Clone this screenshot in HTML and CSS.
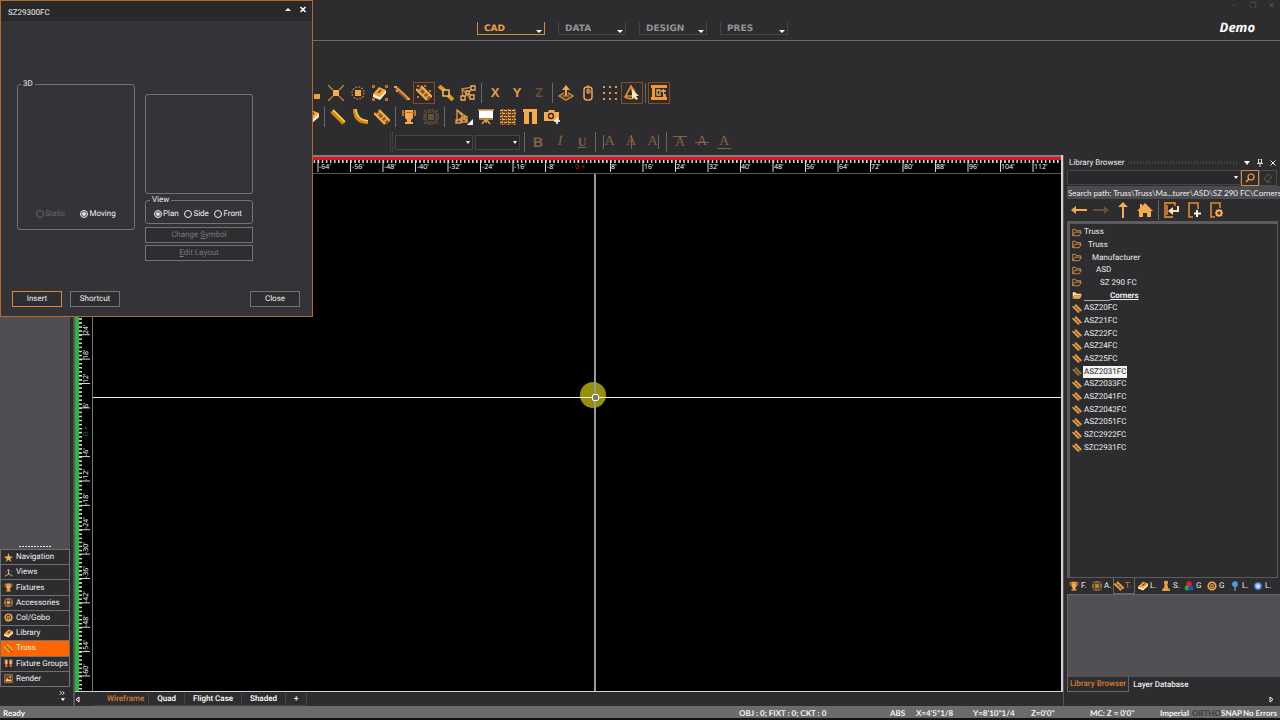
FILE: index.html
```html
<!DOCTYPE html>
<html lang="en">
<head>
<meta charset="utf-8">
<title>SZ29300FC</title>
<link rel="stylesheet" href="styles.css">
</head>
<body>
<svg class="sprite" aria-hidden="true">
  <symbol id="nodes" viewBox="0 0 16 16"><path d="M0 0h2v2h-2zM3 3h2v2h-2zM8 9h6v5h-6z" fill="#f0a040"/></symbol>
  <symbol id="burst" viewBox="0 0 16 16"><path d="M5 5h6v6H5z" fill="#f6a84a"/><path d="M0 0l5 5M16 0l-5 5M0 16l5-5M16 16l-5-5" stroke="#c47c2a" stroke-width="1.5"/></symbol>
  <symbol id="ring" viewBox="0 0 16 16"><path d="M5 5h6v6H5z" fill="#f6a84a"/><circle cx="8" cy="8" r="6" fill="none" stroke="#c08038" stroke-width="1.5" stroke-dasharray="1.5 1.6"/></symbol>
  <symbol id="bookdots" viewBox="0 0 16 16"><path d="M1 9l6-7 7 3-6 8z" fill="#f6a63c"/><path d="M1 9l7 3 6-7v3l-6 7-7-3z" fill="#fff0c8"/><path d="M6 8l3-3" stroke="#5a3a18" stroke-width="1.5"/><path d="M0 0h3v3H0zM13 0h3v3h-3zM0 13h3v3H0zM13 13h3v3h-3z" fill="#b87428"/></symbol>
  <symbol id="beam" viewBox="0 0 16 16"><path d="M2 3l12 11" stroke="#8c5a24" stroke-width="4"/><path d="M2 2l12 11" stroke="#f0a444" stroke-width="1.500"/><path d="M0 1h3v2H0zM13 13h3v2h-3zM2 5h2v2H2z" fill="#f0a444"/></symbol>
  <symbol id="truss" viewBox="0 0 16 16"><path d="M3 3l11 11" stroke="#8c5822" stroke-width="5"/><path d="M0 4l11 11M5 1l11 11" stroke="#f8ac48" stroke-width="2.200"/><path d="M3 6l4-3M7 10l4-4M10 13l4-4" stroke="#f8ac48" stroke-width="1.200"/></symbol>
  <symbol id="trussd" viewBox="0 0 16 16"><use href="#truss"/><path d="M1 0h2v2H1zM8 0h2v2H8zM13 5h2v2h-2zM1 11h2v2H1z" fill="#bb7c38"/></symbol>
  <symbol id="joint" viewBox="0 0 16 16"><path d="M1 1l6 5M10 10l5 5" stroke="#dc9a20" stroke-width="4"/><path d="M5 5h6v6H5z" fill="#2d2d30" stroke="#f6b660" stroke-width="1.6"/></symbol>
  <symbol id="links" viewBox="0 0 16 16"><path d="M2 4l11-2L9 8 3 13zM3 5l7 8" fill="none" stroke="#c88638" stroke-width="1.3"/><path d="M11 1h4v4h-4zM1 11h4v4H1zM10 10h4v4h-4zM6 6h3v3H6z" fill="#33281c" stroke="#f2ad5c" stroke-width="1.300"/></symbol>
  <symbol id="place" viewBox="0 0 16 16"><path d="M8 11V3" stroke="#f6a84a" stroke-width="2"/><path d="M4 5l4-5 4 5z" fill="#f6a84a"/><path d="M6 8l-5 3 7 4 7-4-5-3M5 11h6" fill="none" stroke="#c8842e" stroke-width="1.6"/></symbol>
  <symbol id="mouse" viewBox="0 0 16 16"><rect x="4" y="2" width="8" height="13" rx="3" fill="none" stroke="#f2a44a" stroke-width="1.5"/><path d="M8 0v8M7 5h3v3H7z" stroke="#f2a44a" fill="none"/></symbol>
  <symbol id="dots" viewBox="0 0 16 16"><path d="M1 1h2v2H1zM7 1h2v2H7zM13 1h2v2h-2zM1 7h2v2H1zM7 7h2v2H7zM13 7h2v2h-2zM1 13h2v2H1zM7 13h2v2H7zM13 13h2v2h-2z" fill="#e29a48"/></symbol>
  <symbol id="select" viewBox="0 0 16 16"><path d="M7 1L1 12c3 2 6 2 9 1zM7 1l4 6M2 11h8" fill="none" stroke="#dc902c" stroke-width="1.6"/><path d="M8 4v10l2-2 2 3 2-1-2-3h3z" fill="#ffe4bc"/></symbol>
  <symbol id="measure" viewBox="0 0 16 16"><path d="M0 0h16v3H0zM0 12h16v3H0zM1 3h3v9H1zM12 9h3v4h-3z" fill="#f09c2c"/><path d="M6 5h3v5H6zM10 6h5M12.500 4v5" fill="none" stroke="#e8b060" stroke-width="1.3"/></symbol>
  <symbol id="book" viewBox="0 0 16 16"><path d="M0 9l8-8 8 3-8 9z" fill="#f6a63c"/><path d="M0 9l8 3 8-8v4l-8 7-8-3z" fill="#fff0c8"/><path d="M7 7l4-3" stroke="#5a3a18" stroke-width="2"/></symbol>
  <symbol id="pipe" viewBox="0 0 16 16"><path d="M2 2l12 12" stroke="#d48b12" stroke-width="4.6"/><path d="M3 1l12 12" stroke="#ffcf50" stroke-width="1.6"/></symbol>
  <symbol id="curve" viewBox="0 0 16 16"><path d="M3 0c0 8 4 13 13 13" fill="none" stroke="#d48b12" stroke-width="4"/><path d="M4 0c0 7 5 11 12 12" fill="none" stroke="#ffcf50" stroke-width="1.4"/></symbol>
  <symbol id="lamp" viewBox="0 0 16 16"><path d="M4 1h8v8l-2 2v2h2v2H4v-2h2v-2L4 9z" fill="#f6a84a"/><path d="M1 1h2v6H1zM13 1h2v6h-2zM3 3h10v1H3z" fill="#b97430"/></symbol>
  <symbol id="gear" viewBox="0 0 16 16"><path d="M5 5h6v6H5z" fill="currentColor"/><path d="M5 3V1h6v2zM5 13v2h6v-2zM3 5H1v6h2zM13 5h2v6h-2z" fill="none" stroke="currentColor" stroke-width="1.2"/><path d="M1 1l3 3M15 1l-3 3M1 15l3-3M15 15l-3-3" stroke="currentColor" stroke-width="1.200"/></symbol>
  <symbol id="shape" viewBox="0 0 18 16"><path d="M2 1v11l4-3 6 3zM2 1l10 7M7 8h5v5H7zM1 11h5v3H1z" fill="none" stroke="#e49a48" stroke-width="1.3"/><path d="M18 10v6h-6z" fill="#fff"/></symbol>
  <symbol id="board" viewBox="0 0 16 16"><path d="M1 1h14v8H1z" fill="#fff"/><path d="M0 1h16M1 10h14M8 10v4M8 10l-4 5M8 10l4 5" stroke="#e49a48" stroke-width="1.5"/></symbol>
  <symbol id="weave" viewBox="0 0 16 16"><path d="M0 0h16v16H0z" fill="#6b4420"/><path d="M0 1.500h16M0 7.500h16M0 13.500h16" stroke="#f5b66c" stroke-dasharray="3 1"/><path d="M0 4.500h16M0 10.500h16" stroke="#f5b66c" stroke-dasharray="1 2 2 1"/><path d="M2.500 0v16M8.500 0v16M14.500 0v16" stroke="#d99a50" stroke-dasharray="2 1"/></symbol>
  <symbol id="gate" viewBox="0 0 16 16"><path d="M1 0h14v3H1zM2 3h5v12H2zM10 3h5v12h-5z" fill="#f6a84a"/></symbol>
  <symbol id="camera" viewBox="0 0 16 16"><path d="M0 3h4l1-2h5l1 2h4v9H0z" fill="#f6ab4c"/><circle cx="7" cy="7" r="2.5" fill="#f6ab4c" stroke="#372817" stroke-width="1.4"/><path d="M13 9v6M10 12h6" stroke="#fff" stroke-width="1.6"/></symbol>
  <symbol id="star" viewBox="0 0 16 16"><path d="M8 0l2 6 6 .5-5 3.500 2 6-5-4-5 4 2-6-5-3.500L6 6z" fill="#f5ae50"/></symbol>
  <symbol id="axes" viewBox="0 0 16 16"><circle cx="8" cy="4" r="2" fill="#f5ae50"/><path d="M8 6v5l-5 3M8 10l5 3" fill="none" stroke="#e0e0d0" stroke-width="1.5"/><path d="M1 12h3v3H1z" fill="#d33"/><path d="M12 12h3v3h-3z" fill="#3b4"/><path d="M2 5l3 3M14 5l-3 3" stroke="#67b"/></symbol>
  <symbol id="gobo" viewBox="0 0 16 16"><circle cx="8" cy="8" r="6" fill="none" stroke="#f0a848" stroke-width="2.6"/><path d="M11 6H6v5h4V8H8" fill="none" stroke="#f0a848" stroke-width="1.6"/></symbol>
  <symbol id="groups" viewBox="0 0 16 16"><path d="M1 1h6v8H6v5H2V9H1zM9 1h6v8h-1v5h-4V9H9z" fill="#bd7c35"/><path d="M3 2h2v7H3zM11 2h2v7h-2z" fill="#ffd890"/></symbol>
  <symbol id="picture" viewBox="0 0 16 16"><path d="M1 1h14v14H1z" fill="#6f4620" stroke="#d5964a"/><path d="M2 13l4-6 3 4 2-2 3 4z" fill="#ffd08a"/><circle cx="11" cy="5" r="1.500" fill="#ffd08a"/></symbol>
  <symbol id="pawn" viewBox="0 0 16 16"><path d="M5 0h6v5h-1v2h1v5h3v4H2v-4h3V7h1V5H5z" fill="#f0a040"/></symbol>
  <symbol id="rgb" viewBox="0 0 16 16"><circle cx="8" cy="5" r="4.500" fill="#d8232b"/><circle cx="5" cy="11" r="4" fill="#2ba63b"/><circle cx="11" cy="11" r="4" fill="#3048c8"/></symbol>
  <symbol id="pin" viewBox="0 0 16 16"><path d="M8 7v9" stroke="#bbb" stroke-width="1.5"/><circle cx="8" cy="5" r="4.500" fill="#4a9af0"/></symbol>
  <symbol id="disc" viewBox="0 0 16 16"><circle cx="8" cy="8" r="7" fill="#2c5fa8"/><circle cx="8" cy="8" r="4" fill="#d4e6fa" stroke="#79acf0" stroke-width="2"/></symbol>
  <symbol id="folder" viewBox="0 0 14 11"><path d="M1 10V1h4l1 2h6v2M1 10l3-5h9l-3 5z" fill="none" stroke="#d9984c" stroke-width="1.2"/></symbol>
  <symbol id="folderon" viewBox="0 0 14 11"><path d="M1 1h4l1 2h7v2H3l-2 4z" fill="#ffe2b0"/><path d="M3 5h11l-3 5H1z" fill="#f9a93a"/></symbol>
  <symbol id="left" viewBox="0 0 16 16"><path d="M0 8l5-4v3h11v2H5v3z" fill="currentColor"/></symbol>
  <symbol id="right" viewBox="0 0 16 16"><path d="M16 8l-5-4v3H0v2h11v3z" fill="currentColor"/></symbol>
  <symbol id="up" viewBox="0 0 16 16"><path d="M8 0l5 5H9v11H7V5H3z" fill="currentColor"/></symbol>
  <symbol id="home" viewBox="0 0 16 16"><path d="M8 1l8 8h-2v6h-4v-4H6v4H2V9H0l3-3V2h2v2z" fill="currentColor"/></symbol>
  <symbol id="enter" viewBox="0 0 16 16"><path d="M11 4V1H1v14h8M3 3v10" fill="none" stroke="#c97d28" stroke-width="1.800"/><path d="M14 4v5H7" fill="none" stroke="#ffe0b4" stroke-width="2"/><path d="M9 5v8L4 9z" fill="#ffe0b4"/></symbol>
  <symbol id="add" viewBox="0 0 16 16"><path d="M12 7V1H3v14h4" fill="none" stroke="#e08c24" stroke-width="1.600"/><path d="M11 8v7M8 11.500h7" stroke="#fff0d8" stroke-width="2"/></symbol>
  <symbol id="conf" viewBox="0 0 16 16"><path d="M12 6V1H3v14h4" fill="none" stroke="#e08c24" stroke-width="1.600"/><circle cx="11" cy="11" r="2.500" fill="none" stroke="#f6ab4c" stroke-width="1.800"/><path d="M11 7v1M11 14v1M7 11h1M14 11h1M8 8l1 1M14 8l-1 1M8 14l1-1M14 14l-1-1" stroke="#f6ab4c" stroke-width="1.300"/></symbol>
</svg>

<div class="app">
  <header class="top">
    <nav class="modes">
      <button class="mode on">CAD<i class="caret"></i></button>
      <button class="mode">DATA<i class="caret"></i></button>
      <button class="mode">DESIGN<i class="caret"></i></button>
      <button class="mode">PRES<i class="caret"></i></button>
    </nav>
    <div class="brand">
      <div class="caption"><span>–</span><span>❐</span><span>✕</span></div>
      <strong class="demo">Demo</strong>
    </div>
  </header>

  <div class="bars">
    <div class="bar bar-one">
      <button class="tool" aria-label="Nodes"><svg><use href="#nodes"/></svg></button>
      <button class="tool" aria-label="Explode"><svg><use href="#burst"/></svg></button>
      <button class="tool" aria-label="Ring"><svg><use href="#ring"/></svg></button>
      <button class="tool" aria-label="Library item"><svg><use href="#bookdots"/></svg></button>
      <button class="tool" aria-label="Beam"><svg><use href="#beam"/></svg></button>
      <button class="tool boxed" aria-label="Truss snap"><svg><use href="#trussd"/></svg></button>
      <button class="tool" aria-label="Joint"><svg><use href="#joint"/></svg></button>
      <button class="tool" aria-label="Links"><svg><use href="#links"/></svg></button>
      <i class="sep"></i>
      <button class="tool axis">X</button><button class="tool axis">Y</button><button class="tool axis dim">Z</button>
      <i class="sep"></i>
      <button class="tool" aria-label="Place"><svg><use href="#place"/></svg></button>
      <button class="tool" aria-label="Mouse"><svg><use href="#mouse"/></svg></button>
      <button class="tool" aria-label="Grid"><svg><use href="#dots"/></svg></button>
      <button class="tool boxed" aria-label="Select"><svg><use href="#select"/></svg></button>
      <i class="sep"></i>
      <button class="tool boxed" aria-label="Measure"><svg><use href="#measure"/></svg></button>
    </div>
    <div class="bar bar-two">
      <button class="tool" aria-label="Library"><svg><use href="#book"/></svg></button>
      <i class="sep"></i>
      <button class="tool" aria-label="Pipe"><svg><use href="#pipe"/></svg></button>
      <button class="tool" aria-label="Curved pipe"><svg><use href="#curve"/></svg></button>
      <button class="tool" aria-label="Truss"><svg><use href="#truss"/></svg></button>
      <i class="sep"></i>
      <button class="tool" aria-label="Fixture"><svg><use href="#lamp"/></svg></button>
      <button class="tool dim" aria-label="Accessory"><svg><use href="#gear"/></svg></button>
      <i class="sep wide"></i>
      <button class="tool" aria-label="Shape"><svg class="broad"><use href="#shape"/></svg></button>
      <button class="tool" aria-label="Board"><svg><use href="#board"/></svg></button>
      <button class="tool" aria-label="Fabric"><svg><use href="#weave"/></svg></button>
      <button class="tool" aria-label="Drape"><svg><use href="#gate"/></svg></button>
      <button class="tool" aria-label="Add camera"><svg><use href="#camera"/></svg></button>
    </div>
    <div class="bar bar-three">
      <i class="grip"></i>
      <span class="combo combo-font"><select aria-label="Font"><option></option></select><i class="caret"></i></span>
      <span class="combo combo-size"><select aria-label="Font size"><option></option></select><i class="caret"></i></span>
      <i class="sep"></i>
      <button class="tool letter bold">B</button><button class="tool letter italic">I</button><button class="tool letter under">U</button>
      <i class="sep"></i>
      <button class="tool letter"><span class="edge-left">A</span></button>
      <button class="tool letter"><span class="edge-mid">A</span></button>
      <button class="tool letter"><span class="edge-right">A</span></button>
      <i class="sep"></i>
      <button class="tool letter"><span class="edge edge-top">A</span></button>
      <button class="tool letter"><span class="edge edge-strike">A</span></button>
      <button class="tool letter"><span class="edge edge-bottom">A</span></button>
    </div>
  </div>

  <main class="work">
    <aside class="side">
      <div class="side-fill"><i class="side-dots"></i></div>
      <div class="side-list">
        <button><svg><use href="#star"/></svg>Navigation</button>
        <button><svg><use href="#axes"/></svg>Views</button>
        <button><svg><use href="#lamp"/></svg>Fixtures</button>
        <button><svg><use href="#gear"/></svg>Accessories</button>
        <button><svg><use href="#gobo"/></svg>Col/Gobo</button>
        <button><svg><use href="#book"/></svg>Library</button>
        <button class="on"><svg><use href="#truss"/></svg>Truss</button>
        <button><svg><use href="#groups"/></svg>Fixture Groups</button>
        <button><svg><use href="#picture"/></svg>Render</button>
      </div>
      <div class="side-more"><svg viewBox="0 0 8 12"><path d="M1 0l2 2-2 2M4 0l2 2-2 2" fill="none" stroke="#fff"/><path d="M2 8h5L4.500 11z" fill="#fff"/></svg></div>
    </aside>

    <section class="stage">
      <div class="view">
        <svg class="ruler-h">
          <defs>
            <pattern id="hmin" x="3" y="0" width="4.0625" height="20" patternUnits="userSpaceOnUse"><path d="M0 5h1.500v3h-1.500z" fill="#ddd"/></pattern>
            <pattern id="hmaj" x="14" y="0" width="32.5" height="20" patternUnits="userSpaceOnUse"><path d="M1 5h1v12h-1z" fill="#ddd"/></pattern>
          </defs>
          <rect class="ruler-top" width="100%" height="2"/><rect class="ruler-red" y="2" width="100%" height="3"/>
          <rect y="5" width="100%" height="12" fill="url(#hmin)"/><rect y="5" width="100%" height="12" fill="url(#hmaj)"/>
          <rect x="495" y="8" width="16" height="9" fill="#000"/>
          <g class="ruler-text">
            <text x="244" y="14">-64'</text><text x="277" y="14">-56'</text><text x="309" y="14">-48'</text><text x="342" y="14">-40'</text><text x="374" y="14">-32'</text><text x="407" y="14">-24'</text><text x="439" y="14">-16'</text><text x="472" y="14">-8'</text>
            <text x="496" y="14" class="zero-h">- 0 +</text>
            <text x="536" y="14">8'</text><text x="569" y="14">16'</text><text x="601" y="14">24'</text><text x="634" y="14">32'</text><text x="666" y="14">40'</text><text x="699" y="14">48'</text><text x="731" y="14">56'</text><text x="764" y="14">64'</text><text x="796" y="14">72'</text><text x="829" y="14">80'</text><text x="861" y="14">88'</text><text x="894" y="14">96'</text><text x="926" y="14">104'</text><text x="959" y="14">112'</text>
          </g>
        </svg>
        <svg class="ruler-v">
          <defs>
            <pattern id="vmin" x="0" y="2" width="20" height="4.0625" patternUnits="userSpaceOnUse"><path d="M3 0h4v1.500h-4z" fill="#ddd"/></pattern>
            <pattern id="vmaj" x="0" y="14" width="20" height="24.375" patternUnits="userSpaceOnUse"><path d="M3 0h12v1h-12z" fill="#ddd"/></pattern>
          </defs>
          <rect class="ruler-green" width="4" height="100%"/>
          <rect x="4" width="12" height="100%" fill="url(#vmin)"/><rect x="4" width="12" height="100%" fill="url(#vmaj)"/>
          <rect x="7" y="252" width="9" height="14" fill="#000"/>
          <g class="ruler-text">
            <text transform="translate(13 160) rotate(-90)">24'</text><text transform="translate(13 185) rotate(-90)">18'</text><text transform="translate(13 209) rotate(-90)">12'</text><text transform="translate(13 234) rotate(-90)">6'</text>
            <text transform="translate(13 266) rotate(-90)" class="zero-v">- 0 +</text>
            <text transform="translate(13 282) rotate(-90)">-6'</text><text transform="translate(13 307) rotate(-90)">-12'</text><text transform="translate(13 331) rotate(-90)">-18'</text><text transform="translate(13 355) rotate(-90)">-24'</text><text transform="translate(13 380) rotate(-90)">-30'</text><text transform="translate(13 404) rotate(-90)">-36'</text><text transform="translate(13 429) rotate(-90)">-42'</text><text transform="translate(13 453) rotate(-90)">-48'</text><text transform="translate(13 478) rotate(-90)">-54'</text><text transform="translate(13 502) rotate(-90)">-60'</text>
          </g>
        </svg>
        <div class="canvas">
          <i class="pointer"></i><i class="cross-v"></i><i class="cross-h"></i><i class="target"></i>
        </div>
      </div>
      <nav class="sheets">
        <button class="sheet-prev" aria-label="Previous sheet"><svg viewBox="0 0 5 7"><path d="M4 1v5L1 3.500z" fill="none" stroke="#fff"/></svg></button>
        <button class="sheet on">Wireframe</button><button class="sheet">Quad</button><button class="sheet">Flight Case</button><button class="sheet">Shaded</button><button class="sheet">+</button>
      </nav>
    </section>

    <aside class="library">
      <div class="lib-head"><span>Library Browser</span><i class="lib-grip"></i><i class="caret"></i>
        <svg class="lib-pin" viewBox="0 0 6 8"><path d="M1.500 0h3v4h-3zM0 4.500h6M3 5v3" fill="none" stroke="#ddd"/></svg>
        <svg class="lib-x" viewBox="0 0 6 6"><path d="M.5.5l5 5M5.500.5l-5 5" stroke="#eee"/></svg></div>
      <div class="lib-search">
        <span class="combo"><select aria-label="Search"><option></option></select><i class="caret"></i></span>
        <button class="find" aria-label="Find"><svg viewBox="0 0 12 12"><circle cx="7" cy="5" r="3" fill="none" stroke="#f0a848" stroke-width="1.200"/><path d="M5 7l-3 3" stroke="#f0a848" stroke-width="1.500"/></svg></button>
        <button class="erase" aria-label="Clear"><svg viewBox="0 0 12 12"><path d="M6 2l4 3-4 4H4L2 7zM4 10h5" fill="none" stroke="#65563f"/></svg></button>
      </div>
      <div class="lib-path">Search path: Truss\Truss\Ma...turer\ASD\SZ 290 FC\Corners</div>
      <div class="lib-tools">
        <button class="tool" aria-label="Back"><svg><use href="#left"/></svg></button>
        <button class="tool dim" aria-label="Forward"><svg><use href="#right"/></svg></button>
        <button class="tool" aria-label="Up"><svg><use href="#up"/></svg></button>
        <button class="tool" aria-label="Home"><svg><use href="#home"/></svg></button>
        <i class="sep"></i>
        <button class="tool" aria-label="Insert"><svg><use href="#enter"/></svg></button>
        <button class="tool" aria-label="Add"><svg><use href="#add"/></svg></button>
        <button class="tool" aria-label="Settings"><svg><use href="#conf"/></svg></button>
      </div>
      <div class="tree"><ul>
        <li><svg><use href="#folder"/></svg>Truss</li>
        <li class="d1"><svg><use href="#folder"/></svg>Truss</li>
        <li class="d2"><svg><use href="#folder"/></svg>Manufacturer</li>
        <li class="d3"><svg><use href="#folder"/></svg>ASD</li>
        <li class="d4"><svg><use href="#folder"/></svg>SZ 290 FC</li>
        <li><svg><use href="#folderon"/></svg><b class="current">Corners</b></li>
        <li><svg><use href="#truss"/></svg>ASZ20FC</li>
        <li><svg><use href="#truss"/></svg>ASZ21FC</li>
        <li><svg><use href="#truss"/></svg>ASZ22FC</li>
        <li><svg><use href="#truss"/></svg>ASZ24FC</li>
        <li><svg><use href="#truss"/></svg>ASZ25FC</li>
        <li class="picked"><svg><use href="#truss"/></svg><span>ASZ2031FC</span></li>
        <li><svg><use href="#truss"/></svg>ASZ2033FC</li>
        <li><svg><use href="#truss"/></svg>ASZ2041FC</li>
        <li><svg><use href="#truss"/></svg>ASZ2042FC</li>
        <li><svg><use href="#truss"/></svg>ASZ2051FC</li>
        <li><svg><use href="#truss"/></svg>SZC2922FC</li>
        <li><svg><use href="#truss"/></svg>SZC2931FC</li>
      </ul></div>
      <nav class="kinds">
        <button><svg><use href="#lamp"/></svg>F.</button><button><svg><use href="#gear"/></svg>A.</button><button class="on"><svg><use href="#truss"/></svg>T.</button><button><svg><use href="#book"/></svg>L.</button><button><svg><use href="#pawn"/></svg>S.</button><button><svg><use href="#rgb"/></svg>G</button><button><svg><use href="#gobo"/></svg>G</button><button><svg><use href="#pin"/></svg>L.</button><button><svg><use href="#disc"/></svg>L.</button>
      </nav>
      <div class="preview"></div>
      <nav class="panels"><button class="on">Library Browser</button><button>Layer Database</button></nav>
      <div class="lib-foot"><svg viewBox="0 0 5 7"><path d="M1 1v5l3-2.500z" fill="none" stroke="#fff"/></svg></div>
    </aside>
  </main>

  <footer class="status">
    <span class="ready">Ready</span>
    <span class="s-obj">OBJ : 0; FIXT : 0; CKT : 0</span><span class="s-abs">ABS</span><span class="s-x">X=4'5"1/8</span><span class="s-y">Y=8'10"1/4</span><span class="s-z">Z=0'0"</span><span class="s-mc">MC: Z = 0'0"</span><span class="s-unit">Imperial</span><span class="s-ortho">ORTHO</span><span class="s-snap">SNAP</span><span class="s-err">No Errors</span>
  </footer>
</div>

<form class="dialog" role="dialog" aria-label="SZ29300FC">
  <div class="dlg-head"><span>SZ29300FC</span>
    <button type="button" aria-label="Roll up"><svg viewBox="0 0 8 8"><path d="M1 6l3-3 3 3z" fill="#fff"/></svg></button>
    <button type="button" aria-label="Close window"><svg viewBox="0 0 8 8"><path d="M1.500 2l5 5M6.500 2l-5 5" stroke="#fff" stroke-width="1.500"/></svg></button>
  </div>
  <div class="dlg-body">
    <fieldset class="box3d"><legend>3D</legend>
      <label class="dim"><input type="radio" name="kind" disabled>Static</label>
      <label><input type="radio" name="kind" checked>Moving</label>
    </fieldset>
    <div class="dlg-col">
      <div class="thumb"></div>
      <fieldset class="boxview"><legend>View</legend>
        <label><input type="radio" name="view" checked>Plan</label>
        <label><input type="radio" name="view">Side</label>
        <label><input type="radio" name="view">Front</label>
      </fieldset>
      <button type="button" class="btn" disabled>Change <u>S</u>ymbol</button>
      <button type="button" class="btn" disabled><u>E</u>dit Layout</button>
    </div>
  </div>
  <div class="dlg-foot">
    <button type="button" class="btn main">Insert</button><button type="button" class="btn">Shortcut</button><button type="button" class="btn last">Close</button>
  </div>
</form>
</body>
</html>
```
FILE: styles.css
```css
* { box-sizing: border-box; }
body {
  margin: 0;
  background: #2d2d30;
  color: #ececec;
  font: 8px/12px Roboto, "Noto Sans", sans-serif;
  text-rendering: geometricPrecision;
  overflow: hidden;
}
button { margin: 0; padding: 0; border: 0; background: none; color: inherit; font: inherit; text-rendering: inherit; }
svg { display: block; }
.sprite { position: absolute; width: 0; height: 0; }
.caret { border: 3px solid transparent; border-top-color: #fff; border-bottom: 0; width: 0; height: 0; }
.app { height: 100vh; display: grid; grid-template-rows: 41px 114px minmax(0, 1fr) 14px; }

.top { display: flex; align-items: flex-end; border-bottom: 1px solid #6c6c6e; }
.modes { display: flex; gap: 13px; margin-left: 477px; padding-bottom: 5px; }
.mode {
  width: 68px; height: 13px; padding: 2px 2px 0 6px;
  display: flex; align-items: center; justify-content: space-between;
  font: bold 9px/10px "DejaVu Sans", sans-serif; color: #929294;
  border: 1px solid #454547; border-top: 0;
}
.mode .caret { margin-top: 4px; }
.mode.on { color: #f0a040; border-color: #d68a3e; }
.brand { margin-left: auto; align-self: stretch; padding-right: 5px; }
.caption { display: flex; justify-content: flex-end; gap: 12px; color: #555557; height: 14px; }
.demo { display: block; font: italic bold 13px/16px "Open Sans", sans-serif; color: #fff; padding: 5px 20px 0 0; text-align: right; }

.bars { display: flex; flex-direction: column; gap: 1px; padding-top: 40px; }
.bar { display: flex; align-items: center; height: 24px; }
.bar-one { padding-left: 303px; }
.bar-two { padding-left: 300px; height: 22px; }
.bar-three { padding-left: 390px; height: 26px; }
.tool { width: 22px; height: 22px; flex: none; display: flex; align-items: center; justify-content: center; color: #f6ab4c; }
.tool svg { width: 16px; height: 16px; }
.tool .broad { width: 18px; }
.tool.boxed { border: 1px solid #8c4a22; }
.tool.axis { font: bold 13px/16px "Liberation Sans", sans-serif; color: #e49a48; }
.tool.dim, .tool.axis.dim { color: #665039; }
.sep { width: 1px; height: 20px; margin: 0 2px; flex: none; background: #68686a; }
.sep.wide { margin-right: 8px; }
.grip { width: 3px; height: 20px; margin-right: 2px; border: dotted #505052; border-width: 0 1px; }
.combo { position: relative; display: block; height: 15px; }
.combo select { appearance: none; display: block; width: 100%; height: 100%; margin: 0; background: #29292b; border: 1px solid #454547; border-radius: 0; }
.combo .caret { position: absolute; right: 3px; top: 6px; border-width: 3px 2px 0; }
.combo-font { width: 78px; margin-right: 2px; }
.combo-size { width: 45px; margin-right: 2px; }
.tool.letter { font: 14px/14px "Liberation Serif", serif; color: #806544; }
.tool.bold { font: bold 14px/14px "Liberation Sans", sans-serif; }
.tool.italic { font-style: italic; }
.tool.under { font-weight: bold; font-size: 12px; text-decoration: underline; }
.edge-left { border-left: 1px solid; }
.edge-right { border-right: 1px solid; }
.edge { padding: 0 2px; line-height: 12px; }
.edge-top { border-top: 1px solid; }
.edge-bottom { border-bottom: 1px solid; }
.edge-strike { background: linear-gradient(#806544, #806544) center / 100% 1px no-repeat; }
.edge-mid { background: linear-gradient(#806544, #806544) center / 1px 100% no-repeat; }

.work { display: grid; grid-template-columns: 75px minmax(0, 1fr) 217px; min-height: 0; }
.side { display: flex; flex-direction: column; min-height: 0; border-right: 2px solid #555558; padding-right: 3px; }
.side-fill { flex: 1; background: #4f4e52; display: flex; align-items: flex-end; justify-content: center; padding-bottom: 2px; }
.side-dots { width: 32px; height: 1px; background: repeating-linear-gradient(90deg, #eee 0 2px, transparent 2px 3px); }
.side-list { display: grid; grid-auto-rows: 1fr; height: 138px; width: 70px; border: 1px solid #707072; border-bottom: 0; }
.side-list button { display: flex; align-items: center; gap: 3px; padding: 0 0 0 3px; border-bottom: 1px solid #707072; text-align: left; white-space: nowrap; color: #f0f0f0; min-height: 0; min-width: 0; }
.side-list svg { width: 9px; height: 9px; flex: none; color: #e49a48; }
.side-list .on { background: #ff6600; }
.side-more { height: 19px; padding: 4px 4px 0; display: flex; justify-content: flex-end; }
.side-more svg { width: 7px; height: 11px; }

.stage { display: flex; flex-direction: column; min-width: 0; min-height: 0; }
.view {
  flex: 1; min-height: 0; background: #000;
  display: grid; grid-template: "h h" 19px "v c" minmax(0, 1fr) / 18px minmax(0, 1fr);
  border-right: 2px solid #d4d0cd; border-bottom: 1px solid #d4d0cd;
}
.ruler-h { grid-area: h; width: 100%; height: 19px; border-bottom: 1px solid #5a5a5a; }
.ruler-v { grid-area: v; width: 18px; height: 100%; border-right: 1px solid #777; }
.ruler-top { fill: #808080; }
.ruler-red { fill: #e0141c; }
.ruler-green { fill: #28b83c; }
.ruler-text { font: 7px "Open Sans", sans-serif; fill: #fff; }
.zero-h { fill: #e01818; }
.zero-v { fill: #1f8a3c; }
.canvas { grid-area: c; position: relative; overflow: hidden; }
.cross-v, .cross-h, .pointer, .target { position: absolute; }
.cross-v { left: 501px; top: 0; bottom: 0; width: 2px; background: #999; }
.cross-h { left: 0; right: 0; top: 223px; height: 1px; background: #f0f0f0; }
.pointer { left: 487px; top: 208px; width: 26px; height: 26px; border-radius: 50%; background: #96900c; }
.target { left: 499px; top: 220px; width: 7px; height: 7px; border: 1px solid #fff; border-radius: 2px; background: #777; }
.sheets { height: 14px; display: flex; align-items: center; color: #fff; font-weight: 500; }
.sheet-prev { width: 18px; }
.sheet-prev svg { width: 5px; height: 7px; }
.sheet { height: 13px; padding: 0 8px; border: 1px solid #444446; border-width: 0 1px 1px 0; }
.sheet.on { color: #d87a2c; padding: 0 4px 0 14px; }

.library { display: flex; flex-direction: column; min-width: 0; min-height: 0; padding-left: 3px; border-left: 1px solid #555558; }
.lib-head { height: 15px; display: flex; align-items: center; gap: 4px; padding: 0 4px 0 2px; }
.lib-grip { flex: 1; height: 3px; margin-right: 3px; background: repeating-linear-gradient(90deg, #444 0 1px, transparent 1px 3px); }
.lib-head .caret { border-width: 4px 3px 0; margin-right: 3px; }
.lib-pin { width: 6px; height: 8px; margin-right: 3px; }
.lib-x { width: 6px; height: 6px; }
.lib-search { display: flex; height: 16px; padding: 0 3px 0 0; }
.lib-search .combo { flex: 1; }
.find, .erase { width: 18px; height: 16px; display: flex; align-items: center; justify-content: center; border: 1px solid #4b4b4d; }
.find { border-color: #d58a38; }
.find svg, .erase svg { width: 12px; height: 12px; }
.lib-path { height: 13px; padding-left: 1px; background: #4b4b4f; white-space: nowrap; font: 8px/14px Lato, sans-serif; }
.lib-tools { height: 22px; display: flex; align-items: center; padding-left: 1px; }
.tree { flex: 1; min-height: 0; margin-right: 2px; border: 1px solid #5c5c5e; border-top-width: 3px; border-left-width: 3px; padding: 2px; }
.tree ul { list-style: none; margin: 0; padding: 0; height: 228px; display: grid; grid-auto-rows: 1fr; }
.tree li { display: flex; align-items: center; gap: 2px; min-height: 0; }
.tree svg { width: 10px; height: 9px; flex: none; }
.tree .d1 { gap: 6px; }
.tree .d2 { gap: 10px; }
.tree .d3 { gap: 14px; }
.tree .d4 { gap: 18px; }
.current { text-decoration: underline; padding-left: 26px; background: linear-gradient(#aaa, #aaa) left 10px / 26px 1px no-repeat; }
.tree .picked { gap: 1px; }
.picked svg { opacity: .6; }
.picked span { background: #f4f4f4; color: #222; padding: 0 1px; }
.kinds { height: 16px; display: flex; gap: 1px; }
.kinds button { width: 22px; display: flex; align-items: center; gap: 2px; padding: 0 0 1px 2px; }
.kinds svg { width: 10px; height: 10px; flex: none; color: #c98838; }
.kinds .on { color: #d87a2c; border: 1px solid #666; border-top: 0; padding: 0; gap: 1px; }
.preview { height: 83px; background: #515055; border: 1px solid #666; border-width: 1px 0 0 1px; }
.panels { height: 15px; display: flex; gap: 4px; align-items: center; font-weight: 500; }
.panels .on { color: #d87a2c; height: 15px; border: 1px solid #68686a; border-top: 0; padding: 0 2px; }
.lib-foot { height: 14px; display: flex; align-items: center; justify-content: flex-end; padding-right: 6px; }
.lib-foot svg { width: 5px; height: 7px; }

.status { display: flex; background: #6b6b6b; border-bottom: 2px solid #111; color: #f4f4f4; padding-left: 3px; white-space: nowrap; font: bold 8px/14px Lato, sans-serif; }
.ready { margin-right: auto; }
.s-obj { width: 151px; }
.s-abs { width: 26px; }
.s-x { width: 57px; }
.s-y { width: 58px; }
.s-z { width: 59px; }
.s-mc { width: 70px; }
.s-unit { width: 32px; }
.s-ortho { width: 29px; color: #3c3c3c; }
.s-snap { width: 22px; }
.s-err { width: 37px; }

.dialog {
  position: absolute; left: 0; top: 0; width: 313px; height: 317px;
  display: flex; flex-direction: column;
  background: #343438; border: 1px solid #b46a2c; color: #eee;
  line-height: 10px;
}
.dlg-head { display: flex; height: 20px; background: #29292b; padding: 4px 5px 0 7px; gap: 7px; }
.dlg-head span { margin-right: auto; padding-top: 3px; }
.dlg-head button, .dlg-head svg { width: 8px; height: 8px; }
.dlg-body { display: grid; grid-template-columns: 118px 108px; gap: 10px; padding: 58px 16px 0; }
fieldset { margin: 0; min-width: 0; border: 1px solid #737376; border-radius: 3px; display: flex; }
legend { padding: 0 2px; }
.box3d { height: 151px; align-items: flex-end; gap: 15px; padding: 0 18px 10px; }
.box3d legend { margin-left: -15px; }
label { display: flex; align-items: center; gap: 1px; }
label.dim { color: #68686b; }
input[type="radio"] { appearance: none; flex: none; width: 8px; height: 8px; margin: 0; border: 1px solid currentColor; border-radius: 50%; color: inherit; }
input[type="radio"]:checked { background: radial-gradient(currentColor 0 1px, transparent 3px); }
.dlg-col { display: flex; flex-direction: column; padding-top: 15px; }
.thumb { height: 100px; border: 1px solid #737376; border-radius: 3px; margin-bottom: 1px; }
.boxview { height: 29px; align-items: flex-start; justify-content: space-between; padding: 4px 10px 0 8px; margin-bottom: 3px; }
.boxview legend { margin-left: -4px; }
.btn { height: 16px; border: 1px solid #737376; background: #2e2e31; }
.btn:disabled { color: #77777a; }
.dlg-col .btn { margin-bottom: 2px; }
.dlg-foot { display: flex; gap: 8px; margin-top: auto; padding: 0 12px 9px 11px; }
.dlg-foot .btn { width: 50px; }
.dlg-foot .main { border-color: #d58a38; }
.last { margin-left: auto; }
```
